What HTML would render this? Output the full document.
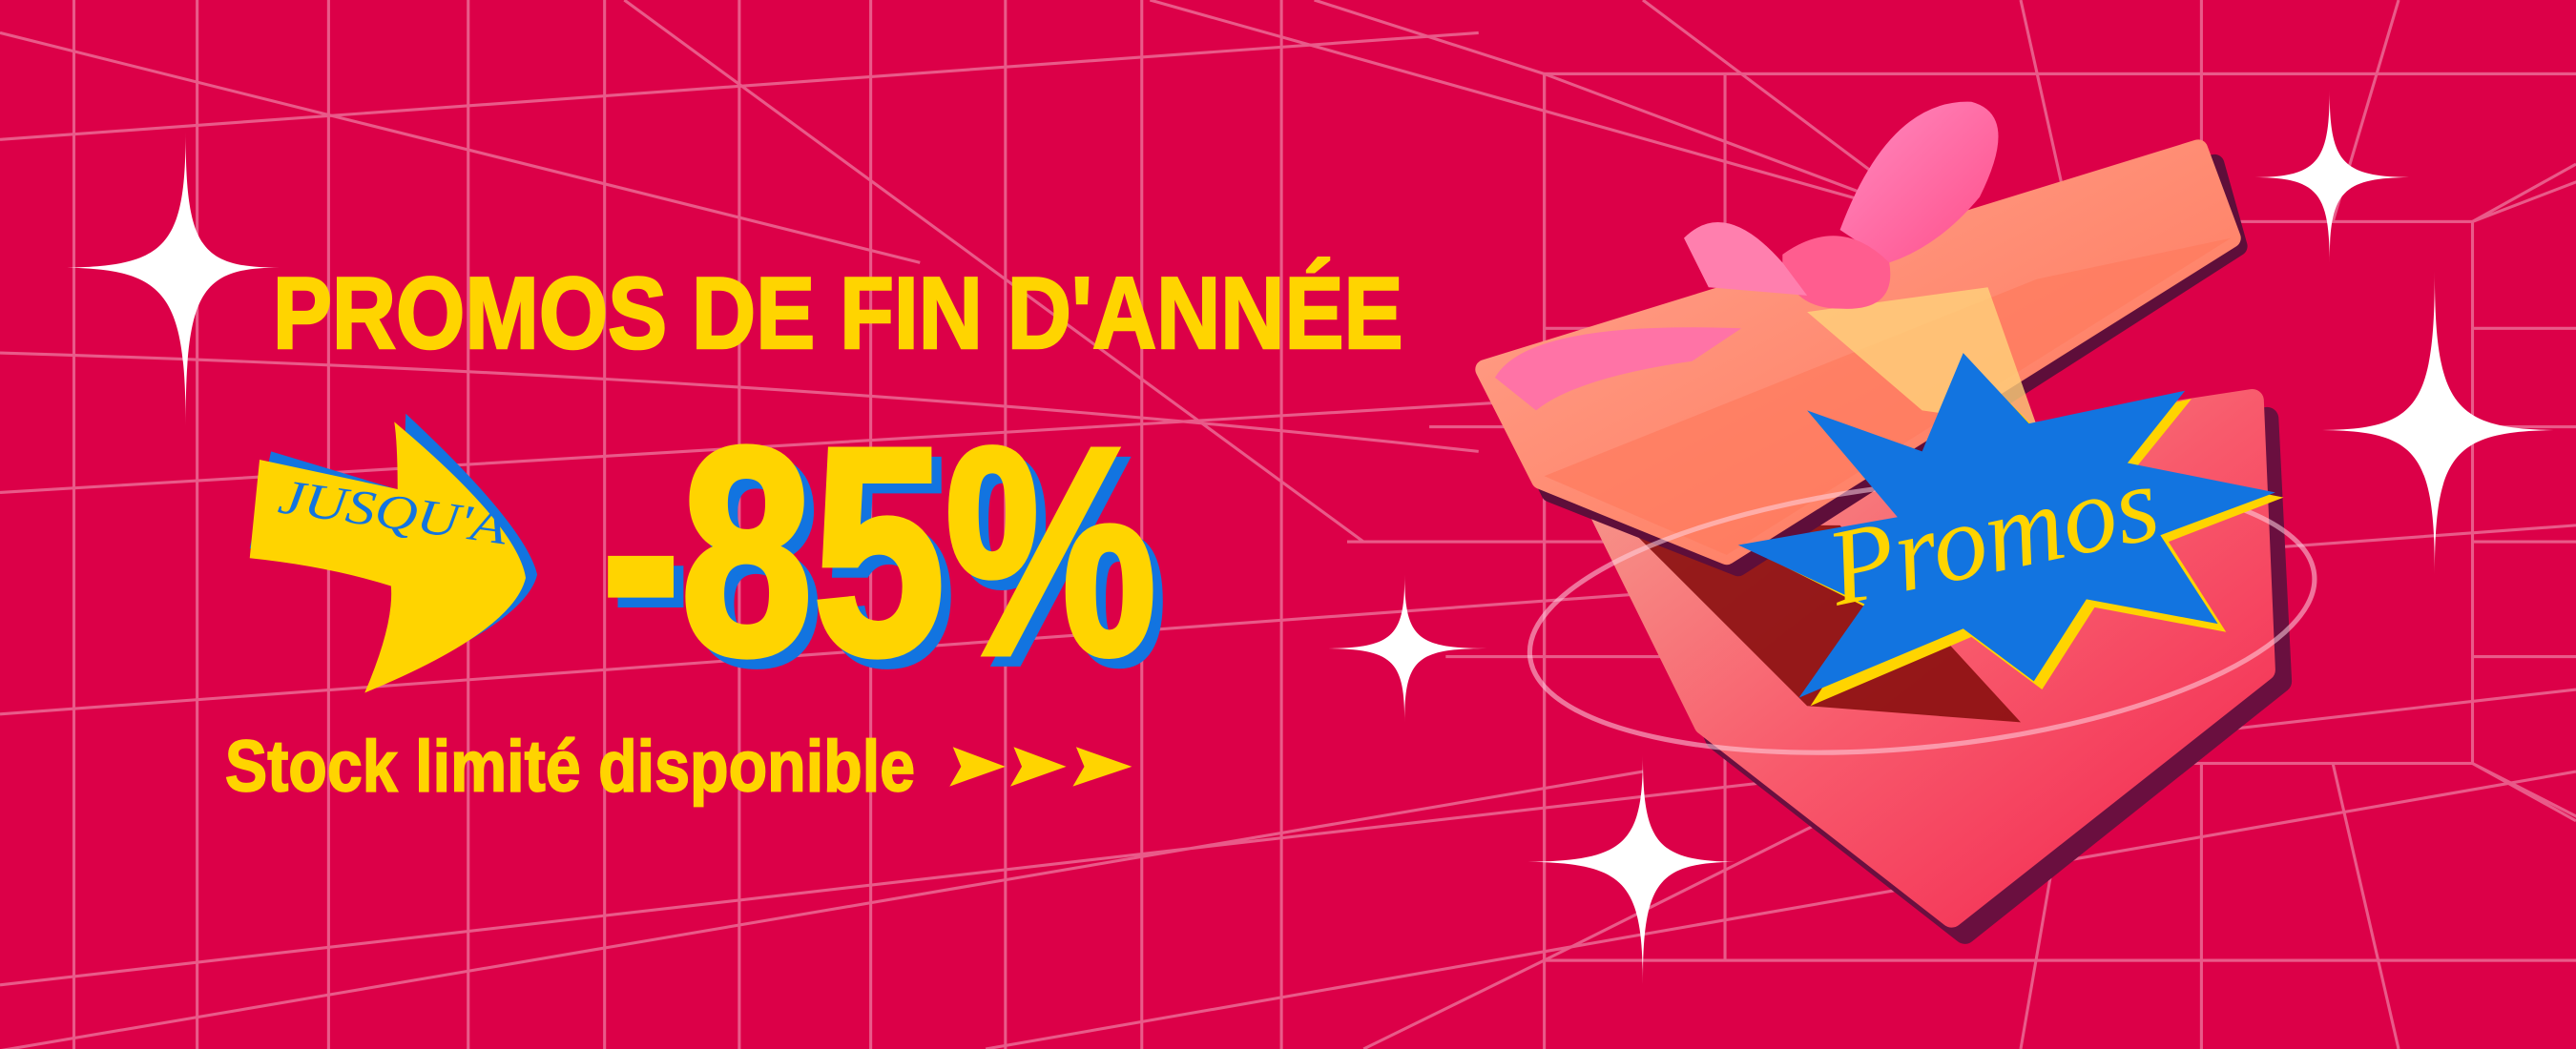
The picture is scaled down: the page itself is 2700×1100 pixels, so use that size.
<!DOCTYPE html>
<html><head><meta charset="utf-8"><style>
html,body{margin:0;padding:0;background:#DC0048;}
svg{display:block}
</style></head><body>
<svg width="2700" height="1100" viewBox="0 0 1568 639" preserveAspectRatio="none" xmlns="http://www.w3.org/2000/svg">
<defs>
<linearGradient id="body" x1="0" y1="0" x2="1" y2="1"><stop offset="0" stop-color="#f6a08f"/><stop offset="0.5" stop-color="#f85a6c"/><stop offset="1" stop-color="#f2244f"/></linearGradient>
<linearGradient id="lid" x1="0" y1="0" x2="1" y2="1"><stop offset="0" stop-color="#ffa58e"/><stop offset="1" stop-color="#ff7257"/></linearGradient>
<linearGradient id="bow" x1="0" y1="0" x2="1" y2="1"><stop offset="0" stop-color="#ff8ac0"/><stop offset="1" stop-color="#ff4f8a"/></linearGradient>
</defs>
<rect width="1568" height="639" fill="#DC0048"/>
<g stroke="#f08aac" stroke-width="1.8" fill="none" opacity="0.65">
<path d="M45 0V639M120 0V639M200 0V639M285 0V639M368 0V639M450 0V639M530 0V639M612 0V639M695 0V639M780 0V639"/>
<path d="M0 85 L900 20 M0 300 L1000 240 M0 215 Q500 230 900 275 M0 435 L1568 320 M0 600 L1568 420 M600 639 L1568 470 M0 640 L1000 470"/>
<path d="M380 0 L830 330 M0 20 L560 160"/>
<rect x="1180" y="135" width="325" height="330"/>
<rect x="940" y="45" width="800" height="540"/>
<path d="M1180 135 L940 45 L800 0 M1505 135 L1740 45 M1180 465 L940 585 L830 639 M1505 465 L1740 585 M700 0 L1180 135 M1505 135 L1568 100 M1505 465 L1568 500"/>
<path d="M1180 200 H940 M1180 260 H870 M1180 330 H820 M1180 400 H880 M1505 200 H1568 M1505 260 H1568 M1505 330 H1568 M1505 400 H1568"/>
<path d="M1260 135 L1230 0 M1340 135 L1340 0 M1420 135 L1460 0 M1260 465 L1230 639 M1340 465 L1340 639 M1420 465 L1460 639 M1000 0 L1180 135"/>
<path d="M940 45 H1568 M940 585 H1568 M940 45 V639 M1050 45 V585"/>
</g>
<!-- gift shadow -->
<path d="M985 315 L1380 255 L1388 415 L1196 568 L1045 450 Z" fill="#6a0f3f" stroke="#6a0f3f" stroke-width="14" stroke-linejoin="round"/>
<path d="M971 305 L1371 244 L1378 408 L1188 558 L1038 441 Z" fill="url(#body)" stroke="url(#body)" stroke-width="14" stroke-linejoin="round"/>
<path d="M990 320 L1120 320 L1230 440 L1100 430 Z" fill="#8a1010" opacity="0.9"/>
<!-- lid -->
<path d="M914 238 L1348 100 L1362 150 L1058 345 L944 300 Z" fill="#5e0e3a" stroke="#5e0e3a" stroke-width="12" stroke-linejoin="round"/>
<path d="M904 225 L1338 91 L1358 145 L1051 338 L938 292 Z" fill="url(#lid)" stroke="url(#lid)" stroke-width="12" stroke-linejoin="round"/>
<path d="M940 290 L1240 170 L1358 145 L1051 338 Z" fill="#ff7a5e" opacity="0.7"/>
<path d="M1100 190 L1210 175 L1240 260 L1170 250 Z" fill="#ffd27a" opacity="0.8"/>
<!-- bow -->
<path d="M1120 140 Q1150 60 1200 62 Q1230 70 1205 120 Q1180 150 1150 160 Z" fill="url(#bow)"/>
<path d="M1085 155 Q1120 130 1150 160 Q1155 190 1120 188 Q1090 188 1085 160 Z" fill="#ff5d8f"/>
<path d="M1025 145 Q1050 120 1085 160 L1100 180 L1040 175 Z" fill="#ff7fae"/>
<path d="M910 230 Q930 195 1060 200 L1030 220 Q960 230 935 250 Z" fill="#ff73a6"/>
<ellipse cx="1170" cy="375" rx="240" ry="80" transform="rotate(-6 1170 375)" fill="none" stroke="#ffd4e2" stroke-width="3" opacity="0.55"/>
<!-- starburst -->
<path d="M1066 335 L1160 318 L1105 256 L1175 280 L1198 220 L1240 262 L1334 243 L1300 285 L1390 303 L1320 330 L1355 385 L1275 370 L1243 420 L1200 388 L1102 430 L1140 372 Z" fill="#FFD400"/>
<path d="M1058 332 L1155 315 L1100 250 L1170 275 L1195 215 L1235 258 L1330 238 L1295 282 L1385 300 L1315 326 L1350 380 L1270 365 L1238 415 L1195 383 L1095 425 L1135 368 Z" fill="#1274E0"/>
<text x="1215" y="348" text-anchor="middle" font-family="'Liberation Serif',serif" font-style="italic" font-size="66" fill="#FFD400" transform="rotate(-12 1215 335)">Promos</text>
<!-- sparkles -->
<g fill="#fff">
<path d="M113 80 C113 151 122 163 170 163 C122 163 113 178 113 260 C113 178 101 163 35 163 C101 163 113 151 113 80Z"/>
<path d="M1418 55 C1418 100 1426 108 1470 108 C1426 108 1418 116 1418 160 C1418 116 1410 108 1370 108 C1410 108 1418 100 1418 55Z"/>
<path d="M1482 165 C1482 249 1494 262 1560 262 C1494 262 1482 275 1482 350 C1482 275 1471 262 1410 262 C1471 262 1482 249 1482 165Z"/>
<path d="M855 350 C855 388 862 395 905 395 C862 395 855 402 855 440 C855 402 848 395 805 395 C848 395 855 388 855 350Z"/>
<path d="M1000 460 C1000 515 1009 525 1060 525 C1009 525 1000 536 1000 600 C1000 536 989 525 925 525 C989 525 1000 515 1000 460Z"/>
</g>
<!-- arrow -->
<path d="M165 275 L248 300 Q246 270 247 252 Q320 320 327 350 Q320 380 227 418 Q240 385 241 350 Q200 340 152 334 Z" fill="#1274E0"/>
<path d="M158 280 L242 298 Q242 270 240 257 Q315 320 320 352 Q312 385 222 422 Q240 380 238 357 Q200 345 152 340 Z" fill="#FFD400"/>
<text x="168" y="322" font-family="'Liberation Serif',serif" font-style="italic" font-size="30" fill="#1274E0" transform="rotate(8 240 320)" textLength="140" lengthAdjust="spacingAndGlyphs">JUSQU'A</text>
<!-- texts -->
<g font-family="'Liberation Sans',sans-serif" font-weight="bold">
<text x="166" y="212" font-size="62" fill="#FFD400" stroke="#FFD400" stroke-width="1.5" textLength="688" lengthAdjust="spacingAndGlyphs">PROMOS DE FIN D'ANNÉE</text>
<text x="372" y="404" font-size="180" fill="#1274E0" stroke="#1274E0" stroke-width="4" textLength="338" lengthAdjust="spacingAndGlyphs">-85%</text>
<text x="366" y="398" font-size="180" fill="#FFD400" stroke="#FFD400" stroke-width="4" textLength="338" lengthAdjust="spacingAndGlyphs">-85%</text>
<text x="137" y="482" font-size="44" fill="#FFD400" stroke="#FFD400" stroke-width="1" textLength="420" lengthAdjust="spacingAndGlyphs">Stock limité disponible</text>
</g>
<g fill="#FFD400"><path d="M580 455 L612 467 L578 479 L585 467Z M617 455 L649 467 L615 479 L622 467Z M655 455 L689 467 L653 479 L660 467Z"/></g>
</svg>
</body></html>
